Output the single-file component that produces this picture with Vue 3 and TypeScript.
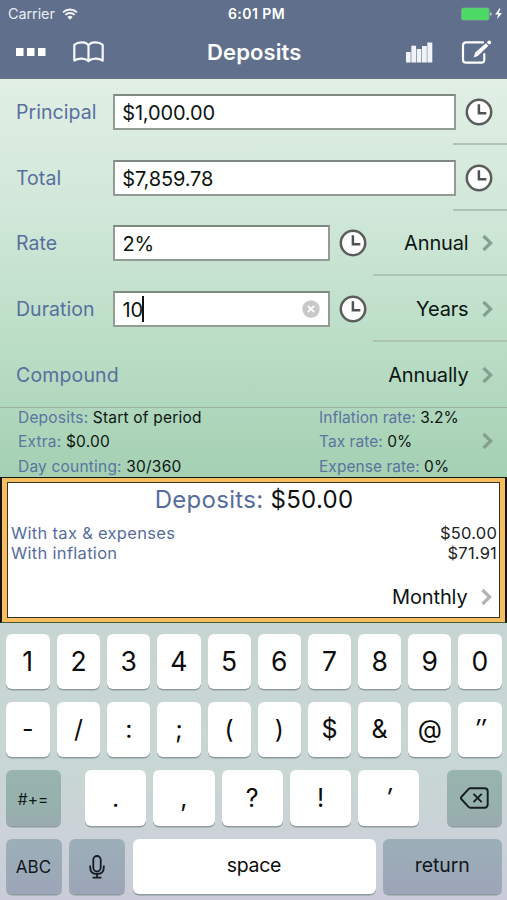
<script setup lang="ts">
interface Field {
  label: string
  value: string
  unit?: string
  editing?: boolean
}

const fields: Field[] = [
  { label: 'Principal', value: '$1,000.00' },
  { label: 'Total', value: '$7,859.78' },
  { label: 'Rate', value: '2%', unit: 'Annual' },
  { label: 'Duration', value: '10', unit: 'Years', editing: true },
]

const leftDetails = [
  { label: 'Deposits:', value: 'Start of period' },
  { label: 'Extra:', value: '$0.00' },
  { label: 'Day counting:', value: '30/360' },
]

const rightDetails = [
  { label: 'Inflation rate:', value: '3.2%' },
  { label: 'Tax rate:', value: '0%' },
  { label: 'Expense rate:', value: '0%' },
]

const digits = ['1', '2', '3', '4', '5', '6', '7', '8', '9', '0']
const symbols = ['-', '/', ':', ';', '(', ')', '$', '&', '@', '″']
const marks = ['.', ',', '?', '!', '′']
const slanted = ['″', '′']
</script>

<template>
  <div class="screen">
    <header class="top">
      <div class="status">
        <div class="carrier">
          <span>Carrier</span>
          <svg class="wifi" width="16" height="12" viewBox="0 0 16 12">
            <path d="M1 4.3A10.2 10.2 0 0 1 15 4.3M3.3 6.9A6.8 6.8 0 0 1 12.7 6.9" fill="none" stroke="#f4f6fa" stroke-width="1.8" />
            <path d="M5.3 9A3.9 3.9 0 0 1 10.7 9L8 11.7Z" fill="#f4f6fa" />
          </svg>
        </div>
        <span class="time">6:01 PM</span>
        <div class="power">
          <svg width="42" height="14" viewBox="0 0 42 14">
            <rect x="0.5" y="1" width="27.5" height="12" rx="2" fill="#4cd964" stroke="#7bb594" stroke-width="0.7" />
            <path d="M29 5.2Q30.8 5.5 30.8 7Q30.8 8.5 29 8.8Z" fill="#b9cdd0" />
            <path d="M38.3 1.5L34.2 7.6H37.2L36 12.3L41 6H37.9L39.5 1.5Z" fill="#fff" />
          </svg>
        </div>
      </div>
      <nav class="nav">
        <svg class="dots" width="30" height="8" viewBox="0 0 30 8" fill="#fff">
          <rect width="7.5" height="8" /><rect x="11" width="7.5" height="8" /><rect x="22" width="7.5" height="8" />
        </svg>
        <svg class="book" width="32" height="22" viewBox="0 0 32 22" fill="none" stroke="#f6f8fb" stroke-width="2.2" stroke-linejoin="round">
          <path d="M15.500 4.500C13.500 .8 5.500 .2 1.300 3.800V19.600C5.500 16.900 12 17 15.500 20.200C19 17 25.500 16.900 29.700 19.600V3.800C25.500 .2 17.500 .8 15.500 4.500V19.500" />
        </svg>
        <h1 class="title">Deposits</h1>
        <svg class="chart" width="27" height="21" viewBox="0 0 27 21" fill="#f0f3f8">
          <rect y="10" width="4.700" height="10.500" /><rect x="5.300" y="3.700" width="4.800" height="16.800" /><rect x="10.700" y="7" width="4.700" height="13.500" /><rect x="16" y="4" width="4.800" height="16.500" /><rect x="21.300" y="0.500" width="5" height="20" />
        </svg>
        <svg class="compose" width="31" height="25" viewBox="0 0 31 25" fill="none" stroke="#fff">
          <path d="M22 2.400H5Q2 2.400 2 5.400V19.700Q2 22.700 5 22.700H20.300Q23.300 22.700 23.300 19.700V14" stroke-width="2.200" stroke-linecap="round" />
          <path d="M12.600 17.600L14.300 12.500L24.800 3.200L27.400 5.800L16.800 16.100Z" fill="#fff" stroke="none" />
          <circle cx="28.200" cy="2.400" r="1.900" fill="#fff" stroke="none" />
        </svg>
      </nav>
    </header>

    <main class="form">
      <div v-for="field in fields" :key="field.label" class="row">
        <label class="label">{{ field.label }}</label>
        <div class="input" :class="{ short: field.unit }">
          <span>{{ field.value }}</span>
          <i v-if="field.editing" class="caret"></i>
          <svg v-if="field.editing" class="clear" width="18" height="18" viewBox="0 0 18 18">
            <circle cx="9" cy="9" r="8.700" fill="#c9c9cb" />
            <path d="M5.800 5.800L12.200 12.200M12.200 5.800L5.800 12.200" stroke="#fff" stroke-width="1.700" />
          </svg>
        </div>
        <svg class="clock" width="28" height="28" viewBox="0 0 28 28">
          <circle cx="14" cy="14" r="12.200" fill="#fff" stroke="#5b5d5c" stroke-width="2.500" />
          <path d="M13.900 6.200V15.200H21.300" fill="none" stroke="#505251" stroke-width="2.500" />
        </svg>
        <template v-if="field.unit">
          <span class="choice">{{ field.unit }}</span>
          <svg class="chevron" width="11" height="18" viewBox="0 0 11 18"><path d="M1.500 2L8.700 9L1.500 16" /></svg>
        </template>
        <i class="rule" :class="{ wide: field.unit }"></i>
      </div>
      <div class="row compound">
        <span class="label">Compound</span>
        <span class="choice">Annually</span>
        <svg class="chevron" width="11" height="18" viewBox="0 0 11 18"><path d="M1.500 2L8.700 9L1.500 16" /></svg>
      </div>
      <section class="details">
        <div class="column">
          <div v-for="item in leftDetails" :key="item.label" class="detail"><span class="key-name">{{ item.label }}</span> {{ item.value }}</div>
        </div>
        <div class="column second">
          <div v-for="item in rightDetails" :key="item.label" class="detail"><span class="key-name">{{ item.label }}</span> {{ item.value }}</div>
        </div>
        <svg class="chevron" width="11" height="18" viewBox="0 0 11 18"><path d="M1.500 2L8.700 9L1.500 16" /></svg>
      </section>
    </main>

    <section class="result">
      <div class="sheet">
        <div class="headline"><span class="line-name">Deposits:</span> $50.00</div>
        <div class="line first"><span class="line-name">With tax &amp; expenses</span><span class="amount">$50.00</span></div>
        <div class="line"><span class="line-name">With inflation</span><span class="amount">$71.91</span></div>
        <div class="period">
          <span class="choice">Monthly</span>
          <svg class="chevron" width="11" height="18" viewBox="0 0 11 18"><path d="M1.500 2L8.700 9L1.500 16" /></svg>
        </div>
      </div>
    </section>

    <section class="keyboard">
      <div class="keys">
        <button v-for="k in digits" :key="k" class="key">{{ k }}</button>
      </div>
      <div class="keys">
        <button v-for="k in symbols" :key="k" class="key symbol" :class="{ slant: slanted.includes(k) }">{{ k }}</button>
      </div>
      <div class="keys">
        <button class="key dark teal more">#+=</button>
        <div class="marks">
          <button v-for="k in marks" :key="k" class="key mark" :class="{ slant: slanted.includes(k) }">{{ k }}</button>
        </div>
        <button class="key dark teal erase" aria-label="Delete">
          <svg width="29" height="22" viewBox="0 0 29 22" fill="none" stroke="#151e20" stroke-width="1.900" stroke-linejoin="round">
            <path d="M10.300 1.300H24.500Q27.700 1.300 27.700 4.500V17.500Q27.700 20.700 24.500 20.700H10.300Q9.300 20.700 8.500 19.900L1.300 12Q.5 11 1.300 10L8.500 2.100Q9.300 1.300 10.300 1.300Z" />
            <path d="M13.500 6.800L21.700 15.200M21.700 6.800L13.500 15.200" />
          </svg>
        </button>
      </div>
      <div class="keys bottom">
        <button class="key dark abc">ABC</button>
        <button class="key dark mic" aria-label="Dictate">
          <svg width="16" height="24" viewBox="0 0 16 24" fill="none" stroke="#151b22" stroke-width="1.800">
            <rect x="4.300" y="1" width="7.400" height="15.500" rx="3.700" />
            <path d="M1.200 10.500V12.500Q1.200 19 8 19Q14.800 19 14.800 12.500V10.500M8 19V22.500M3.600 22.700H12.400" />
          </svg>
        </button>
        <button class="key space">space</button>
        <button class="key dark return">return</button>
      </div>
    </section>
  </div>
</template>

<style>
body {
  margin: 0;
}
</style>

<style scoped>
.screen {
  width: 507px;
  height: 900px;
  overflow: hidden;
  display: flex;
  flex-direction: column;
  font-family: Inter, "Liberation Sans", sans-serif;
  color: #0d1512;
}
.screen * {
  box-sizing: border-box;
}
svg {
  display: block;
  flex: none;
}
.top {
  height: 79px;
  flex: none;
  background: #606f8b;
  border-bottom: 1px solid #66758a;
  color: #fff;
}
.status {
  height: 27px;
  display: grid;
  grid-template-columns: 1fr auto 1fr;
  align-items: center;
  padding: 0 4px 0 8px;
  font-size: 14.5px;
}
.carrier {
  display: flex;
  align-items: center;
  gap: 7px;
  color: #e9edf4;
  letter-spacing: -0.1px;
}
.time {
  font-weight: 600;
  font-size: 14px;
  letter-spacing: 0.45px;
  padding-left: 2px;
}
.power {
  display: flex;
  justify-content: flex-end;
}
.nav {
  height: 50px;
  display: flex;
  align-items: center;
  padding: 0 15px 0 16px;
}
.book {
  margin-left: 26.500px;
}
.title {
  flex: 1;
  margin: 0;
  text-align: center;
  font-size: 22px;
  font-weight: 600;
  letter-spacing: 0.1px;
  padding-right: 2px;
}
.compose {
  margin-left: 28px;
}
.form {
  height: 398px;
  flex: none;
  background: linear-gradient(#e1efe5, #d2e8da 31%, #bddfc8 63%, #a4d0b3);
}
.row {
  height: 65.800px;
  display: flex;
  align-items: center;
  padding: 0 14px 0 16px;
  position: relative;
}
.label {
  width: 97px;
  font-size: 19.5px;
  letter-spacing: 0.05px;
  color: #586f9d;
}
.input {
  width: 344.500px;
  height: 36px;
  display: flex;
  align-items: center;
  padding: 2px 8px 0 7.500px;
  background: #fff;
  border: 2px solid #929b94;
  border-top-color: #7f8982;
  font-size: 20px;
  letter-spacing: -0.15px;
}
.input.short {
  width: 217px;
}
.caret {
  width: 2px;
  height: 26px;
  margin: -2px 0 0 -0.500px;
  background: #111;
}
.clear {
  margin: -2px 0 0 auto;
}
.clock {
  margin-left: 8.800px;
}
.choice {
  margin-left: auto;
  font-size: 20px;
  letter-spacing: -0.15px;
}
.chevron {
  margin-left: 13.500px;
  fill: none;
  stroke: #83a090;
  stroke-width: 3.200;
}
.rule {
  position: absolute;
  right: 0;
  bottom: 0;
  width: 54px;
  height: 2px;
  background: #afc2b6;
}
.rule.wide {
  width: 134px;
}
.row.compound {
  height: 64.800px;
}
.compound .label {
  width: auto;
  letter-spacing: 0.15px;
}
.details {
  height: 70px;
  border-top: 1.500px solid #9fb1a5;
  display: flex;
  align-items: center;
  padding: 0 14px 0 18px;
}
.column {
  width: 301px;
  font-size: 15.500px;
  letter-spacing: 0.2px;
}
.second {
  width: auto;
  letter-spacing: 0.05px;
}
.column .detail {
  line-height: 24.300px;
  white-space: nowrap;
}
.key-name {
  color: #5a74a0;
}
.details .chevron {
  margin: -2px 0 0 auto;
}
.result {
  height: 146px;
  flex: none;
  padding: 4px 5px;
  background: #f7be61;
  border: solid #17150e;
  border-width: 1.500px 2px;
  border-bottom-color: #465a2e;
}
.sheet {
  height: 100%;
  background: #fff;
  border: 1.500px solid #39301d;
  display: flex;
  flex-direction: column;
}
.headline {
  height: 33px;
  line-height: 33px;
  padding-left: 1px;
  text-align: center;
  font-size: 24px;
  letter-spacing: 0.3px;
  color: #111;
}
.line {
  display: flex;
  justify-content: space-between;
  height: 19.500px;
  line-height: 19.500px;
  padding: 0 2px 0 3px;
  font-size: 16.500px;
}
.line.first {
  margin-top: 8px;
}
.line-name {
  color: #586d9d;
}
.line .line-name {
  letter-spacing: 0.3px;
}
.amount {
  letter-spacing: 0.2px;
  color: #222;
}
.period {
  display: flex;
  align-items: center;
  margin-top: 22px;
  padding-right: 7px;
}
.period .chevron {
  stroke: #b3b3b3;
}
.keyboard {
  flex: 1;
  padding: 10.500px 5.500px 0;
  display: flex;
  flex-direction: column;
  gap: 13.300px;
  background: linear-gradient(#c8d6d3, #c8d7d3 55%, #cbd2d8 75%, #c9ccd8);
}
.keys {
  display: flex;
  gap: 7px;
  height: 55.200px;
}
.key {
  flex: 1 1 0;
  min-width: 0;
  height: 55.200px;
  display: flex;
  align-items: center;
  justify-content: center;
  padding: 0;
  border: 0;
  border-radius: 6px;
  background: #fff;
  box-shadow: 0 1.500px 0 #8f9c9e;
  font: 26.500px Inter, "Liberation Sans", sans-serif;
  color: #0c0c0c;
}
.keys > .key:not(.dark):first-child {
  flex: none;
  width: 44.500px;
}
.symbol,
.mark {
  font-size: 25px;
  padding-bottom: 1px;
}
.slant {
  font-style: italic;
}
.marks {
  width: 334.500px;
  margin-left: 17.500px;
  display: flex;
  gap: 7px;
}
.key.dark {
  flex: none;
  background: linear-gradient(#9cafb8, #9ca5b8);
  color: #10181c;
}
.key.teal {
  background: linear-gradient(#98b4af, #97b1ad 60%, #9aabb1);
}
.key.more {
  width: 55px;
  font-size: 15.500px;
  padding-top: 2px;
}
.key.erase {
  width: 55px;
  margin-left: auto;
}
.key.abc {
  width: 56px;
  font-size: 17px;
}
.bottom {
  gap: 7.500px;
}
.key.mic {
  width: 56px;
}
.key.space {
  font-size: 19.500px;
  letter-spacing: -0.3px;
  padding-bottom: 3px;
}
.key.return {
  width: 118.500px;
  font-size: 19.500px;
  letter-spacing: -0.1px;
  padding-bottom: 3px;
}
</style>
